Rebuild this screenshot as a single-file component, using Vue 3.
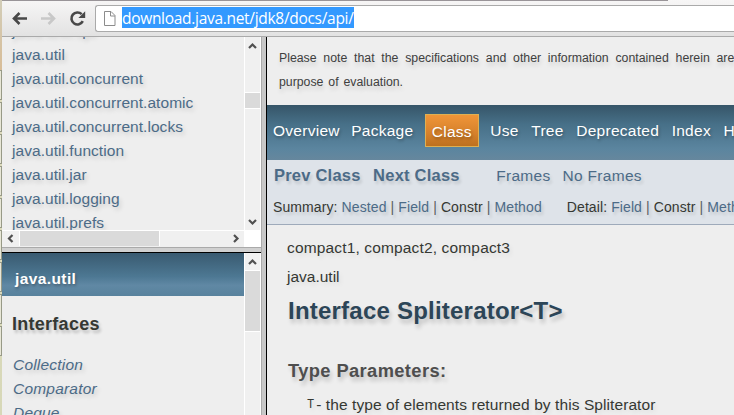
<script setup>
const packages = [
  'java.text.spi',
  'java.util',
  'java.util.concurrent',
  'java.util.concurrent.atomic',
  'java.util.concurrent.locks',
  'java.util.function',
  'java.util.jar',
  'java.util.logging',
  'java.util.prefs',
]
const interfaces = ['Collection', 'Comparator', 'Deque']
</script>

<template>
  <div class="window">
    <div class="desktop"><i v-for="n in 9" :key="n"></i></div>
    <div class="browser">
      <header class="toolbar">
        <div class="tabline"></div>
        <div class="controls">
          <svg class="nav" width="80" height="20" viewBox="0 0 80 20">
            <g fill="none" stroke-width="2.6">
              <path d="M18 9.5H5M10.5 4L5 9.5L10.5 15" stroke="#484848" />
              <path d="M32 9.5H45M39.5 4L45 9.5L39.5 15" stroke="#c8c8c8" />
              <path d="M73.8 12.2A6 6 0 1 1 72.7 5.2" stroke="#484848" />
            </g>
            <path d="M76.2 2.2V9H69.4Z" fill="#484848" />
          </svg>
          <div class="address">
            <svg class="page" width="14" height="17" viewBox="0 0 14 17">
              <path d="M1.5 1.5H8L12 5.5V15.5H1.5Z" fill="#fff" stroke="#8c8c8c" />
              <path d="M7.5 1.5V6H12" fill="none" stroke="#8c8c8c" />
            </svg>
            <span class="url">download.java.net/jdk8/docs/api/</span>
          </div>
        </div>
      </header>

      <main class="frames">
        <aside class="side">
          <section class="packages">
            <div class="view">
              <ul class="list">
                <li v-for="p in packages" :key="p"><a>{{ p }}</a></li>
              </ul>
              <div class="vbar">
                <svg width="15" height="17" viewBox="0 0 15 17"><path d="M4 11L7.5 7.5L11 11" /></svg>
                <div class="track"><div class="thumb small"></div></div>
                <svg width="15" height="17" viewBox="0 0 15 17"><path d="M4 7L7.5 10.5L11 7" /></svg>
              </div>
            </div>
            <div class="hbar">
              <svg width="18" height="17" viewBox="0 0 18 17"><path d="M10.5 4L7 7.5L10.5 11" /></svg>
              <div class="hthumb"></div>
              <svg width="18" height="17" viewBox="0 0 18 17"><path d="M8 4L11.5 7.5L8 11" /></svg>
              <div class="corner"></div>
            </div>
          </section>
          <div class="hsplit"></div>
          <section class="types">
            <div class="typelist">
              <h1>java.util</h1>
              <h2>Interfaces</h2>
              <ul><li v-for="t in interfaces" :key="t"><a>{{ t }}</a></li></ul>
            </div>
            <div class="vbar">
              <svg width="15" height="17" viewBox="0 0 15 17"><path d="M4 11L7.5 7.5L11 11" /></svg>
              <div class="track"><div class="thumb large"></div></div>
            </div>
          </section>
        </aside>
        <div class="vsplit"></div>
        <article class="doc">
          <div class="note">
            <p class="wide">Please note that the specifications and other information contained herein are</p>
            <p>purpose of evaluation.</p>
          </div>
          <nav class="topnav">
            <a>Overview</a><a>Package</a><a class="active">Class</a><a>Use</a><a>Tree</a><a>Deprecated</a><a>Index</a><a>Help</a>
          </nav>
          <div class="subnav">
            <div class="links"><b class="prev">Prev Class</b><b class="next">Next Class</b><a class="fr">Frames</a><a>No Frames</a></div>
            <div class="summary">
              <span class="sum">Summary: <a>Nested</a> <i>|</i> <a>Field</a> <i>|</i> Constr <i>|</i> <a>Method</a></span>
              <span>Detail: <a>Field</a> <i>|</i> Constr <i>|</i> <a>Method</a></span>
            </div>
          </div>
          <div class="header">
            <p class="compact">compact1, compact2, compact3</p>
            <p class="pkg">java.util</p>
            <h2 class="title">Interface Spliterator&lt;T&gt;</h2>
            <h3 class="params">Type Parameters:</h3>
            <p class="param"><code>T</code><span>- the type of elements returned by this Spliterator</span></p>
          </div>
        </article>
      </main>
    </div>
  </div>
</template>

<style>
body { margin: 0; overflow: hidden; }
</style>
<style scoped>
* { box-sizing: border-box; }
p, h1, h2, h3, ul { margin: 0; padding: 0; list-style: none; }
.window { width: 734px; height: 415px; display: flex; overflow: hidden; background: #eee; font-family: "Liberation Sans", Arial, sans-serif; color: #353833; white-space: nowrap; }
.desktop { width: 2px; flex: none; padding-top: 70px; background: linear-gradient(#d2cdb8, #d8bd98 70px, #dedbbe 71px, #d7d8b8); }
.desktop i { display: block; height: 30px; margin-bottom: 2px; border: 1px solid #989a87; border-left: 0; background: #e8e7d7; }
.browser { flex: 1; min-width: 0; }
.toolbar { height: 37px; border-bottom: 1px solid #aaa; background: linear-gradient(#f7f6f6, #e2e2e2); overflow: hidden; }
.tabline { width: 666px; height: 1px; background: #999498; }
.controls { display: flex; height: 35px; padding: 4px 0 0 7px; }
.nav { flex: none; margin: 4px 6px 0 0; }
.address { flex: 1; height: 27px; display: flex; border: 1px solid #aaa; border-right: 0; border-radius: 3px 0 0 3px; background: #fff; }
.page { margin: 4px 5px 0 7px; }
.url { height: 21px; margin-top: 1px; line-height: 23px; font-family: "Open Sans", sans-serif; font-size: 15.5px; letter-spacing: -.3px; color: #fff; background: #3399ff; }
.frames { display: flex; height: 378px; }
.side { width: 259px; flex: none; }
.packages { height: 210px; }
.view { display: flex; height: 193px; }
.list { width: 242px; height: 193px; padding-left: 10px; overflow: hidden; }
.list li { height: 24px; line-height: 24px; font-size: 15.5px; letter-spacing: .05px; }
.list li:first-child { margin-top: -18px; }
.list a, .typelist a { color: #4c6b87; text-shadow: 2px 3px 4px rgba(0,0,0,.15); }
.vbar { width: 17px; border-left: 1px solid #fff; border-right: 1px solid #fff; background: #f0f0f0; display: flex; flex-direction: column; }
svg { display: block; flex: none; }
.vbar path, .hbar path { fill: none; stroke: #505050; stroke-width: 2.2; }
.track { flex: 1; }
.thumb { border: solid #fff; border-width: 1px 0; background: #dadada; }
.small { height: 17px; margin-top: 38px; }
.large { height: 62px; }
.hbar { height: 17px; display: flex; border-top: 1px solid #fff; background: #f0f0f0; }
.hthumb { width: 141px; height: 15px; border: solid #fff; border-width: 0 1px; background: #dadada; margin: 0 66px 0 -1px; }
.corner { width: 17px; background: #fff; }
.hsplit { height: 6px; border-top: 1px solid #aaa; border-bottom: 1px solid #000; background: #d0d0d0; }
.types { display: flex; height: 162px; }
.typelist { width: 242px; overflow: hidden; }
.typelist h1 { height: 43px; padding: 8px 0 0 13px; line-height: 35px; font-size: 15.5px; letter-spacing: .4px; color: #fff; background: linear-gradient(#395a70, #4d7893 55%, #6088a4 75%, #58829d); text-shadow: 1px 2px 3px rgba(0,0,0,.3); }
.typelist h2 { padding-left: 10px; height: 57px; line-height: 57px; font-size: 18px; letter-spacing: .27px; text-shadow: 2px 3px 3px rgba(0,0,0,.2); }
.typelist li { height: 24px; padding-left: 11px; line-height: 24px; font-size: 15.5px; font-style: italic; letter-spacing: .2px; }
.vsplit { width: 6px; flex: none; background: #c8c8c8; border-left: 1px solid #aaa; border-right: 1px solid #000; }
.doc { flex: 1; min-width: 0; overflow: hidden; background: #eee; }
.note { height: 68px; padding: 9px 0 0 12px; font-size: 12.3px; line-height: 24px; color: #404040; word-spacing: 1.5px; text-shadow: 1px 4px 4px rgba(0,0,0,.13); }
.wide { word-spacing: 3.35px; }
.topnav { height: 55px; display: flex; align-items: center; padding-left: 6px; font-size: 15.5px; letter-spacing: .27px; color: #fff; background: linear-gradient(#365568, #477088 35%, #5b859f 80%, #66879d); text-shadow: 1px 2px 3px rgba(0,0,0,.3); }
.topnav a { margin-right: 11.4px; line-height: 20px; position: relative; top: -2px; }
.topnav .active { border: 1px solid #dfb052; height: 33px; line-height: 33px; padding: 0 6px; color: #fff; background: linear-gradient(#f09538, #d5812b 60%, #bd701f); }
.topnav .active ~ a { margin-right: 12.6px; }
.subnav { height: 65px; border-bottom: 1px solid #9eaaba; background: #dee3e9; text-shadow: 2px 3px 3px rgba(0,0,0,.13); }
.links { height: 31px; display: flex; line-height: 31px; padding-left: 7px; font-size: 15.5px; letter-spacing: .3px; color: #4c6b87; }
.links b { font-size: 16.5px; letter-spacing: .22px; }
.prev { margin-right: 12.5px; }
.next { margin-right: 36.5px; }
.fr { margin-right: 12px; }
.summary { padding-left: 6px; height: 33px; line-height: 32px; font-size: 14px; letter-spacing: .1px; display: flex; }
.summary a { color: #4c6b87; }
.summary i { font-style: normal; color: #5b6062; }
.sum { margin-right: 25px; }
.header { padding-left: 20px; }
.compact { height: 37px; padding-top: 7px; line-height: 31px; font-size: 15.5px; letter-spacing: .15px; }
.pkg { height: 29px; line-height: 29px; font-size: 15.5px; }
.compact, .pkg, .param { text-shadow: 2px 3px 4px rgba(0,0,0,.08); }
.title { height: 39px; padding-left: 1px; line-height: 39px; font-size: 24px; letter-spacing: .22px; color: #2c4557; text-shadow: 2px 4px 4px rgba(0,0,0,.2); }
.params { margin-top: 26px; height: 30px; padding-left: 1px; line-height: 30px; font-size: 18.3px; letter-spacing: .4px; color: #4e4e4e; text-shadow: 2px 4px 4px rgba(0,0,0,.2); }
.param { height: 36px; line-height: 37px; padding-left: 20px; font-size: 15.5px; letter-spacing: .08px; display: flex; }
.param code { font-family: "Liberation Mono", monospace; font-size: 12px; line-height: 39px; letter-spacing: 0; margin-right: 2px; }
</style>
